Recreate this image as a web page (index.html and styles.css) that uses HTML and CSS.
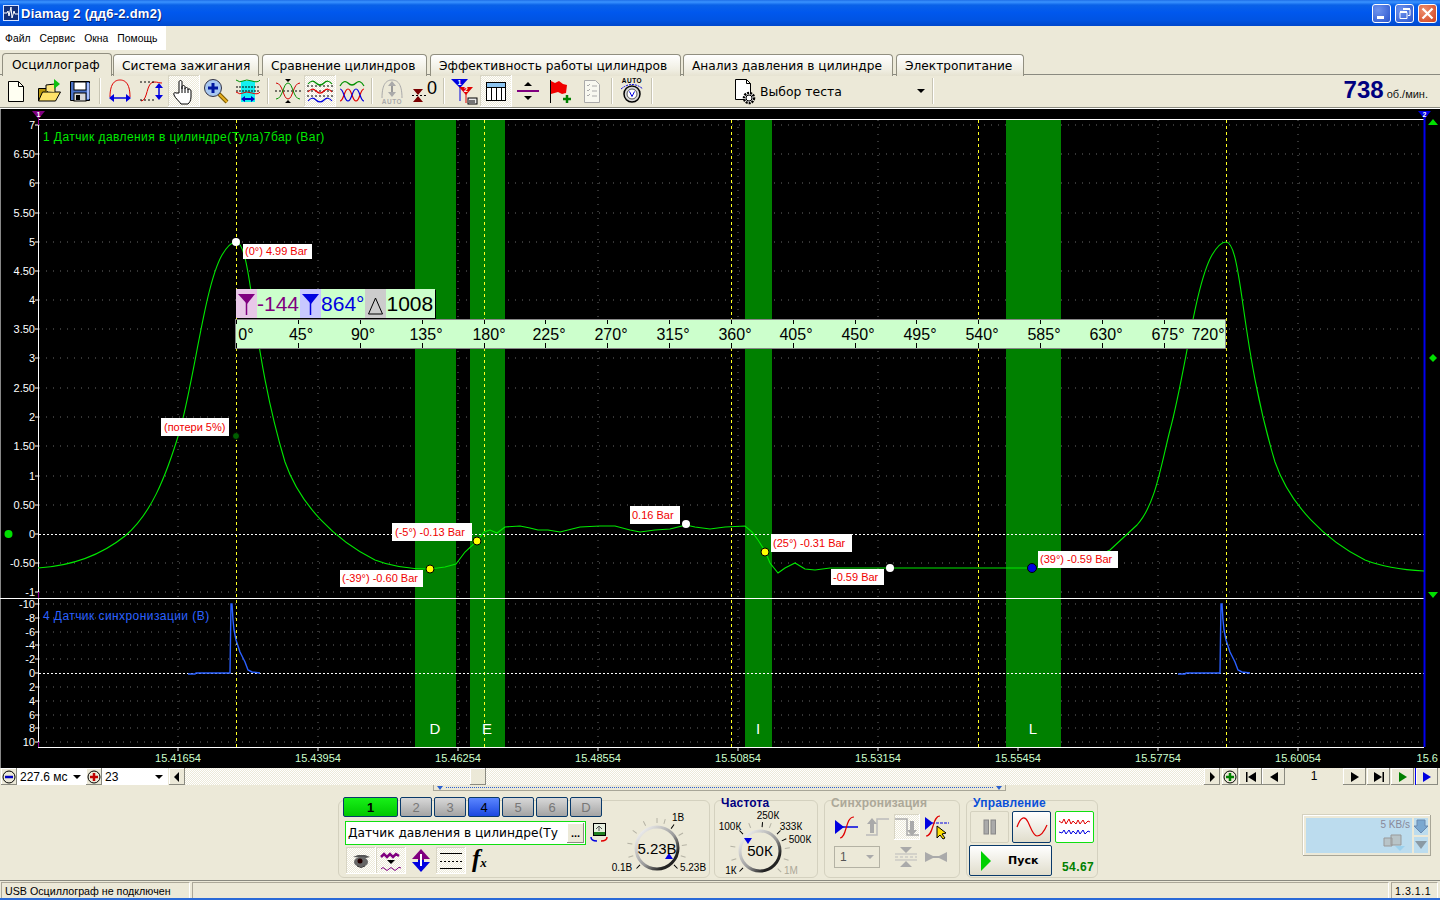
FILE: index.html
```html
<!DOCTYPE html>
<html lang="ru">
<head>
  <meta charset="UTF-8">
  <title>Diamag 2 (дд6-2.dm2)</title>
  <link rel="stylesheet" href="styles.css">
</head>
<body>
  <header class="titlebar">
    <svg class="app-icon" width="16" height="16" viewBox="0 0 16 16"><rect x="0.5" y="0.5" width="15" height="15" fill="#12307a" stroke="#d8e4ff"/><path d="M1 8h3l1-2 1 5 2-9 1 11 2-7 1 3h3" fill="none" stroke="#fff"/></svg>
    <span class="title-text">Diamag 2 (дд6-2.dm2)</span>
    <div class="winbtns">
      <button class="winbtn"><svg width="19" height="19" viewBox="0 0 19 19"><rect x="5" y="12" width="7" height="3" fill="#fff"/></svg></button>
      <button class="winbtn"><svg width="19" height="19" viewBox="0 0 19 19"><path d="M8 5.5h7v6h-2M5 8.5h7v6H5z" fill="none" stroke="#fff"/><path d="M8 5h7M5 8h7" stroke="#fff" stroke-width="2"/></svg></button>
      <button class="winbtn close"><svg width="19" height="19" viewBox="0 0 19 19"><path d="M4.5 4.5l10 10M14.5 4.5l-10 10" stroke="#fff" stroke-width="2.2"/></svg></button>
    </div>
  </header>

  <nav class="menubar">
    <span>Файл</span><span>Сервис</span><span>Окна</span><span>Помощь</span>
  </nav>

  <div class="tabs">
    <div class="tab active">Осциллограф</div>
    <div class="tab w-ign">Система зажигания</div>
    <div class="tab w-cmp">Сравнение цилиндров</div>
    <div class="tab w-eff">Эффективность работы цилиндров</div>
    <div class="tab w-prs">Анализ давления в цилиндре</div>
    <div class="tab w-pwr">Электропитание</div>
  </div>

  <div class="toolbar">
    <button class="tool"><svg width="28" height="28" viewBox="0 0 28 28"><path d="M6.5 4.5h10l5 5v15h-15z" fill="#fffff2" stroke="#000"/><path d="M16.5 4.5v5h5" fill="none" stroke="#000"/></svg></button>
    <button class="tool"><svg width="28" height="28" viewBox="0 0 28 28"><path d="M4.500 11.500h9v12h-9z" fill="#b8960c" stroke="#000"/><path d="M4.500 24l4-9h18l-5 9z" fill="#ffe26a" stroke="#000"/><path d="M12 14V8l9-1v8" fill="#ffe680" stroke="#000"/><path d="M20 2l6 5-6 5z" fill="#10c010"/></svg></button>
    <button class="tool"><svg width="28" height="28" viewBox="0 0 28 28"><path d="M4.500 4.500h19v19h-19z" fill="#4a72c8" stroke="#000"/><rect x="8" y="5" width="12" height="8" fill="#fff" stroke="#000"/><rect x="8" y="16" width="12" height="8" fill="#d8d8d8" stroke="#000"/><rect x="10" y="18" width="4" height="5" fill="#000"/><rect x="21" y="6" width="2.500" height="16" fill="#a8c0ff"/></svg></button>
    <i class="sep"></i>
    <button class="tool"><svg width="28" height="28" viewBox="0 0 28 28"><path d="M4 20C4 5 10 3 14 3s10 2 10 17" fill="none" stroke="#e00000"/><path d="M7 21h14" stroke="#0000e0" stroke-width="1.500"/><path d="M3 21l5-4v8zM25 21l-5-4v8z" fill="#0000e0"/></svg></button>
    <button class="tool"><svg width="28" height="28" viewBox="0 0 28 28"><path d="M3 24c7 0 5-19 13-19" fill="none" stroke="#e00000"/><path d="M16 5c4 0 5 1 8 1" fill="none" stroke="#e00000"/><path d="M2 5h15M2 23h15" stroke="#000" stroke-dasharray="2 2"/><path d="M21 9v10" stroke="#0000e0" stroke-width="1.500"/><path d="M21 6l-4 5h8zM21 23l-4-5h8z" fill="#0000e0"/></svg></button>
    <button class="tool pressed"><svg width="28" height="28" viewBox="0 0 28 28"><path d="M9 16V5c0-2 3-2 3 0v7-2c0-2 3-2 3 0v2c0-2 3-2 3 0v1c0-2 3-1 3 1v6c0 4-2 6-3 7h-7c-1-2-6-6-7-9-1-2 1-3 2-2z" fill="#fff" stroke="#000"/><path d="M12 12v4M15 12v4M18 13v3" stroke="#000"/></svg></button>
    <button class="tool"><svg width="28" height="28" viewBox="0 0 28 28"><path d="M17 17l8 8" stroke="#7a5a00" stroke-width="4"/><path d="M17 17l8 8" stroke="#e8b020" stroke-width="2"/><circle cx="11" cy="11" r="8.500" fill="#a8c8f0" stroke="#334"/><path d="M6 11h10M11 6v10" stroke="#0018a0" stroke-width="3"/></svg></button>
    <button class="tool"><svg width="28" height="28" viewBox="0 0 28 28"><rect x="7" y="4" width="14" height="21" fill="#14f0f0"/><path d="M2 10h24M2 14h24" stroke="#000" stroke-dasharray="2 1"/><path d="M2 3q4 3 7 1t9 0 8-1" fill="none" stroke="#009000"/><path d="M2 15q4 3 7 1t9 0 8-1" fill="none" stroke="#e00000"/><path d="M10 22h8" stroke="#0000c0" stroke-width="2"/><path d="M7 22l4-3v6zM21 22l-4-3v6z" fill="#0000c0"/></svg></button>
    <i class="sep"></i>
    <button class="tool"><svg width="28" height="28" viewBox="0 0 28 28"><path d="M1 14h26" stroke="#000" stroke-dasharray="2 2"/><path d="M2 6c7 0 7 16 12 16s5-16 12-16" fill="none" stroke="#d00000"/><path d="M2 22c7 0 7-16 12-16s5 16 12 16" fill="none" stroke="#009000"/><path d="M11 2h6l-3 3zM11 26h6l-3-3z" fill="#000"/></svg></button>
    <button class="tool pressed"><svg width="28" height="28" viewBox="0 0 28 28"><path d="M1 9h26M1 14h26M1 19h26" stroke="#000" stroke-dasharray="2 2"/><path d="M2 7q4-5 8-1t8 0 8 1" fill="none" stroke="#009000" stroke-width="1.200"/><path d="M2 15q4-5 8-1t8 0 8 1" fill="none" stroke="#e00000" stroke-width="1.200"/><path d="M2 24q4-5 8-1t8 0 8 1" fill="none" stroke="#0000e0" stroke-width="1.200"/></svg></button>
    <button class="tool"><svg width="28" height="28" viewBox="0 0 28 28"><path d="M2 9q4-7 8-3t8 0 8 3" fill="none" stroke="#009000" stroke-width="1.200"/><path d="M2 24c4 0 4-12 8-12s4 12 8 12 4-12 8-12" fill="none" stroke="#e00000" stroke-width="1.200"/><path d="M2 12c4 0 4 12 8 12s4-12 8-12 4 12 8 12" fill="none" stroke="#0000e0" stroke-width="1.200"/></svg></button>
    <i class="sep"></i>
    <button class="tool"><svg width="28" height="28" viewBox="0 0 28 28"><path d="M4 21C4 6 9 3 14 3s10 3 10 18" fill="none" stroke="#aaa"/><path d="M14 7v10" stroke="#999" stroke-width="2"/><path d="M14 4l-4 5h8zM14 20l-4-5h8z" fill="#aaa"/><text class="auto-txt dim" x="14" y="27">AUTO</text></svg></button>
    <button class="tool"><svg width="28" height="28" viewBox="0 0 28 28"><path d="M2 18.500h16" stroke="#000" stroke-dasharray="2 2"/><path d="M3 12h10l-5 6zM3 25h10l-5-6z" fill="#7a0000"/><text class="zero-txt" x="17" y="17">0</text></svg></button>
    <i class="sep"></i>
    <button class="tool"><svg width="28" height="28" viewBox="0 0 28 28"><path d="M1 2h17l-8 9z" fill="#0000e0"/><path d="M10 8v16" stroke="#0000e0"/><path d="M9 10h14l-7 8z" fill="#e00000"/><path d="M16 15v11" stroke="#e00000"/><text class="flag-num" x="9.500" y="8">1</text><text class="flag-num" x="16" y="15">2</text><rect x="18" y="21" width="9" height="6" fill="#e8e8e8" stroke="#000"/><path d="M20 23v3M22 23v3M24 23v3" stroke="#000"/></svg></button>
    <button class="tool pressed"><svg width="28" height="28" viewBox="0 0 28 28"><rect x="4.500" y="5.500" width="19" height="18" fill="#fff" stroke="#000"/><rect x="5" y="6" width="18" height="4" fill="#8cc4f0"/><path d="M4 10.500h20M9.500 10v13M14.500 10v13M19.500 10v13" stroke="#000"/></svg></button>
    <button class="tool"><svg width="28" height="28" viewBox="0 0 28 28"><path d="M3 14h22" stroke="#800080" stroke-width="2"/><path d="M14 5l-4 4h8zM14 23l-4-4h8z" fill="#000"/></svg></button>
    <button class="tool"><svg width="28" height="28" viewBox="0 0 28 28"><path d="M4.500 3v23" stroke="#000"/><path d="M5 4l4 2 4-2 4 3 4 1-1 8-4 1-4-2-7 2z" fill="#f00000"/><path d="M21 18v8M17 22h8" stroke="#008000" stroke-width="2.500"/></svg></button>
    <button class="tool"><svg width="28" height="28" viewBox="0 0 28 28"><path d="M6.500 3.500h11l4 4v18h-15z" fill="#f8f8f0" stroke="#aaa"/><path d="M9 8l1 1 2-2M9 13l1 1 2-2M9 18l1 1 2-2M14 9h5M14 14h5M14 19h5" fill="none" stroke="#aaa"/></svg></button>
    <i class="sep"></i>
    <button class="tool"><svg width="28" height="28" viewBox="0 0 28 28"><text class="auto-txt" x="14" y="6">AUTO</text><path d="M3 12Q14 3 25 12" fill="none" stroke="#0000e0" stroke-dasharray="2 1"/><circle cx="14" cy="17" r="8" fill="#d8d8d8" stroke="#000" stroke-width="1.500"/><circle cx="14" cy="17" r="5" fill="#fff" stroke="#555"/><path d="M11.500 14.500l2.500 5 2.500-5" fill="none" stroke="#0000e0"/></svg></button>
    <i class="sep"></i>
    <div class="test-select">
      <svg width="28" height="28" viewBox="0 0 28 28"><path d="M4.500 2.500h11l4 4v16h-15z" fill="#fff" stroke="#000"/><path d="M15.500 2.500v4h4" fill="none" stroke="#000"/><circle cx="18" cy="21" r="5" fill="#fff" stroke="#000" stroke-width="2.500" stroke-dasharray="2 1"/><circle cx="18" cy="21" r="3" fill="#fff" stroke="#000"/></svg>
      <span>Выбор теста</span>
      <b class="caret"></b>
    </div>
    <i class="sep"></i>
    <div class="rpm"><strong>738</strong><span>об./мин.</span></div>
  </div>

  <div class="scope">
    <svg class="scope-svg" width="1440" height="659" viewBox="0 109 1440 659">
      <g class="grid">
        <path d="M39 154H1424M39 183H1424M39 213H1424M39 242H1424M39 271H1424M39 300H1424M39 329H1424M39 358H1424M39 388H1424M39 417H1424M39 446H1424M39 476H1424M39 505H1424M39 563H1424M39 592H1424M39 125H1424"/>
        <path d="M39 604H1424M39 618H1424M39 632H1424M39 645H1424M39 659H1424M39 687H1424M39 701H1424M39 715H1424M39 728H1424M39 742H1424"/>
        <path d="M178 120V747M318 120V747M458 120V747M598 120V747M738 120V747M878 120V747M1018 120V747M1158 120V747M1298 120V747"/>
      </g>
      <g class="bands">
        <rect x="415" y="120" width="41" height="627"/>
        <rect x="470" y="120" width="35" height="627"/>
        <rect x="745" y="120" width="27" height="627"/>
        <rect x="1006" y="120" width="55" height="627"/>
      </g>
      <path class="cursor" d="M236.500 120V747M484.500 120V747M731.500 120V747M978.500 120V747M1226.500 120V747"/>
      <path class="zero" d="M39 534.500H1424M39 673.500H1424"/>
      <path class="frame" d="M38.500 119V747M38 119.500H1424M0 598.500H1424M38 747.500H1424"/>
      <path class="magenta" d="M38.500 112V125M38.500 592V598M38.500 742V747"/>
      <path class="blue-edge" d="M1424.500 115V747"/>
      <path class="yticks" d="M35 125h3M35 154h3M35 183h3M35 213h3M35 242h3M35 271h3M35 300h3M35 329h3M35 358h3M35 388h3M35 417h3M35 446h3M35 476h3M35 505h3M35 534h3M35 563h3M35 592h3M35 604h3M35 618h3M35 632h3M35 645h3M35 659h3M35 673h3M35 687h3M35 701h3M35 715h3M35 728h3M35 742h3M178 747v4M318 747v4M458 747v4M598 747v4M738 747v4M878 747v4M1018 747v4M1158 747v4M1298 747v4"/>

      <path class="trace-green" d="M38 568C70 566 100 556 125 536C150 515 165 480 180 430C195 375 205 285 222 255C228 245 232 242 236 242C243 242 247 262 253 305C260 355 268 405 285 462C300 505 335 540 375 560C390 566 405 569 430 569L445 567L456 564L465 552L477 541L484 532L490 530L497 533L505 527L520 526L530 528L538 530L548 530L560 532L580 527L600 526L615 526L630 530L640 532L655 530L670 529L686 525L695 527L710 529L725 527L745 526L752 532L758 540L765 551L770 563L778 573L785 568L795 563L805 569L815 570L830 568L860 568L890 568L1032 568L1045 567L1061 564L1085 562L1110 550L1137 525C1155 505 1160 470 1170 430C1185 375 1195 285 1212 255C1218 245 1222 242 1226 242C1233 242 1237 262 1243 305C1250 355 1258 405 1275 462C1290 505 1325 540 1365 560C1385 568 1405 570 1424 571"/>
      <polyline class="trace-blue" points="188,674 195,674 196,673 230,673 231,604 232,604 233,620 234,630 236,640 240,652 245,662 248,670 252,672 260,673"/>
      <polyline class="trace-blue" points="1178,674 1185,674 1186,673 1220,673 1221,604 1222,604 1223,620 1224,630 1226,640 1230,652 1235,662 1238,670 1242,672 1250,673"/>

      <g class="ylabels">
        <text x="35" y="129">7</text><text x="35" y="158">6.50</text><text x="35" y="187">6</text><text x="35" y="217">5.50</text><text x="35" y="246">5</text><text x="35" y="275">4.50</text><text x="35" y="304">4</text><text x="35" y="333">3.50</text><text x="35" y="362">3</text><text x="35" y="392">2.50</text><text x="35" y="421">2</text><text x="35" y="450">1.50</text><text x="35" y="480">1</text><text x="35" y="509">0.50</text><text x="35" y="538">0</text><text x="35" y="567">-0.50</text><text x="35" y="596">-1</text>
        <text x="35" y="608">-10</text><text x="35" y="622">-8</text><text x="35" y="636">-6</text><text x="35" y="649">-4</text><text x="35" y="663">-2</text><text x="35" y="677">0</text><text x="35" y="691">2</text><text x="35" y="705">4</text><text x="35" y="719">6</text><text x="35" y="732">8</text><text x="35" y="746">10</text>
      </g>
      <g class="xlabels">
        <text x="178" y="762">15.41654</text><text x="318" y="762">15.43954</text><text x="458" y="762">15.46254</text><text x="598" y="762">15.48554</text><text x="738" y="762">15.50854</text><text x="878" y="762">15.53154</text><text x="1018" y="762">15.55454</text><text x="1158" y="762">15.57754</text><text x="1298" y="762">15.60054</text><text class="x-last" x="1438" y="762">15.6</text>
      </g>
      <text class="ch-green" x="43" y="141">1 Датчик давления в цилиндре(Тула)7бар (Bar)</text>
      <text class="ch-blue" x="43" y="620">4 Датчик синхронизации (В)</text>
      <g class="band-names">
        <text x="435" y="734">D</text><text x="487" y="734">E</text><text x="758" y="734">I</text><text x="1033" y="734">L</text>
      </g>

      <path d="M32 111h13l-6.500 8z" fill="#800080"/><text class="flag-num" x="38.500" y="116.500">1</text>
      <path d="M1418 111h13l-6.500 8z" fill="#0000e0"/><text class="flag-num" x="1424.500" y="116.500">2</text>
      <path d="M1428 125l5-6 5 6zM1428 592l5 6 5-6z" fill="#00e000"/>
      <path d="M1433 354l4 4-4 4-4-4z" fill="#00e000"/>
      <circle cx="8.500" cy="534" r="4" fill="#00e000"/>

      <g class="tags">
        <rect x="243" y="244" width="69" height="15"/><text x="245" y="255">(0°) 4.99 Bar</text>
        <rect x="161" y="418" width="68" height="18"/><text x="164" y="431">(потери 5%)</text>
        <rect x="392" y="523" width="80" height="18"/><text x="395" y="536">(-5°) -0.13 Bar</text>
        <rect x="340" y="570" width="83" height="17"/><text x="342" y="582">(-39°) -0.60 Bar</text>
        <rect x="630" y="506" width="50" height="18"/><text x="632" y="519">0.16 Bar</text>
        <rect x="771" y="534" width="81" height="18"/><text x="773" y="547">(25°) -0.31 Bar</text>
        <rect x="831" y="569" width="53" height="16"/><text x="833" y="581">-0.59 Bar</text>
        <rect x="1038" y="551" width="80" height="17"/><text x="1040" y="563">(39°) -0.59 Bar</text>
      </g>
      <g class="pts">
        <circle class="pt-white" cx="236" cy="242" r="4"/>
        <circle cx="236" cy="436" r="3.500" fill="#006000"/>
        <circle cx="430" cy="569" r="4" fill="#ff0"/>
        <circle cx="477" cy="541" r="4" fill="#ff0"/>
        <circle class="pt-white" cx="686" cy="524" r="4"/>
        <circle cx="765" cy="552" r="4" fill="#ff0"/>
        <circle class="pt-white" cx="890" cy="568" r="4"/>
        <circle cx="1032" cy="568" r="4.500" fill="#0000e0"/>
      </g>

      <rect class="ruler-bg" x="235.500" y="319.500" width="990" height="29"/>
      <path class="ruler-ticks" d="M236.500 320v4M298.500 320v4M360.500 320v4M422.500 320v4M484.500 320v4M545.500 320v4M607.500 320v4M669.500 320v4M731.500 320v4M793.500 320v4M855.500 320v4M916.500 320v4M978.500 320v4M1040.500 320v4M1102.500 320v4M1164.500 320v4M236.500 343v5M298.500 343v5M360.500 343v5M422.500 343v5M484.500 343v5M545.500 343v5M607.500 343v5M669.500 343v5M731.500 343v5M793.500 343v5M855.500 343v5M916.500 343v5M978.500 343v5M1040.500 343v5M1102.500 343v5M1164.500 343v5"/>
      <g class="ruler-labels">
        <text x="246" y="340">0°</text><text x="301" y="340">45°</text><text x="363" y="340">90°</text><text x="426" y="340">135°</text><text x="489" y="340">180°</text><text x="549" y="340">225°</text><text x="611" y="340">270°</text><text x="673" y="340">315°</text><text x="735" y="340">360°</text><text x="796" y="340">405°</text><text x="858" y="340">450°</text><text x="920" y="340">495°</text><text x="982" y="340">540°</text><text x="1044" y="340">585°</text><text x="1106" y="340">630°</text><text x="1168" y="340">675°</text><text x="1208" y="340">720°</text>
      </g>
    </svg>

    <div class="readout">
      <span class="ro-icon purple"><svg width="21" height="28" viewBox="0 0 21 28"><path d="M2 5h17l-8 10z" fill="#800080"/><path d="M10.500 12v14" stroke="#800080" stroke-width="1.500"/></svg></span>
      <span class="ro-val purple-text">-144</span>
      <span class="ro-icon blue"><svg width="21" height="28" viewBox="0 0 21 28"><path d="M2 5h17l-8 10z" fill="#0000e0"/><path d="M10.500 12v14" stroke="#0000e0" stroke-width="1.500"/></svg></span>
      <span class="ro-val blue-text">864°</span>
      <span class="ro-icon grey"><svg width="21" height="28" viewBox="0 0 21 28"><path d="M10.500 9L3.500 25h14z" fill="none" stroke="#000"/></svg></span>
      <span class="ro-val">1008</span>
    </div>
  </div>

  <div class="scrollrow">
    <button class="sbtn round"><svg width="14" height="14" viewBox="0 0 14 14"><circle cx="7" cy="7" r="6" fill="none" stroke="#000"/><path d="M3 7h8" stroke="#0000c0" stroke-width="2.500"/></svg></button>
    <div class="sfield first">227.6 мс<b class="caret"></b></div>
    <button class="sbtn round"><svg width="14" height="14" viewBox="0 0 14 14"><circle cx="7" cy="7" r="6" fill="none" stroke="#000"/><path d="M3 7h8M7 3v8" stroke="#c00000" stroke-width="2.500"/></svg></button>
    <div class="sfield second">23<b class="caret"></b></div>
    <button class="sbtn"><svg width="8" height="10" viewBox="0 0 8 10"><path d="M6 0v10L1 5z"/></svg></button>
    <div class="track"><div class="thumb"></div></div>
    <button class="sbtn"><svg width="8" height="10" viewBox="0 0 8 10"><path d="M2 0v10l5-5z"/></svg></button>
    <button class="sbtn plus"><svg width="14" height="14" viewBox="0 0 14 14"><circle cx="7" cy="7" r="6" fill="none" stroke="#000"/><path d="M3 7h8M7 3v8" stroke="#008000" stroke-width="2.500"/></svg></button>
    <button class="sbtn nav gap"><svg width="12" height="10" viewBox="0 0 12 10"><path d="M1 0h1.500v10H1zM11 0v10L3 5z"/></svg></button>
    <button class="sbtn nav"><svg width="12" height="10" viewBox="0 0 12 10"><path d="M10 0v10L2 5z"/></svg></button>
    <div class="pageno">1</div>
    <button class="sbtn nav"><svg width="12" height="10" viewBox="0 0 12 10"><path d="M2 0v10l8-5z"/></svg></button>
    <button class="sbtn nav gap"><svg width="12" height="10" viewBox="0 0 12 10"><path d="M11 0H9.500v10H11zM1 0v10l8-5z"/></svg></button>
    <button class="sbtn nav gap"><svg width="12" height="10" viewBox="0 0 12 10"><path d="M2 0v10l8-5z" fill="#008000"/></svg></button>
    <button class="sbtn nav last"><svg width="12" height="10" viewBox="0 0 12 10"><path d="M2 0v10l8-5z" fill="#0000e0"/></svg></button>
  </div>

  <div class="lower">
    <div class="range-bar"><b class="mark"></b><span class="range-dots"></span><b class="mark"></b></div>
    <div class="groups">
      <section class="grp grp-channel">
        <div class="channel-col">
          <div class="channels">
            <button class="ch ch-on">1</button>
            <button class="ch">2</button>
            <button class="ch">3</button>
            <button class="ch ch-sel">4</button>
            <button class="ch">5</button>
            <button class="ch">6</button>
            <button class="ch">D</button>
          </div>
          <div class="combo-row">
            <div class="combo"><span class="combo-text">Датчик давления в цилиндре(Ту</span><button class="dots">...</button></div>
            <svg width="18" height="20" viewBox="0 0 18 20"><rect x="3.500" y="0.500" width="12" height="12" fill="#e8f0e0" stroke="#000"/><rect x="4" y="9" width="11" height="3" fill="#208020"/><path d="M6 6l3-3 3 3M9 8V4" fill="none" stroke="#555"/><path d="M1 14q0 4 6 4" fill="none" stroke="#0000e0" stroke-width="1.500"/><path d="M17 14q0 4-6 4" fill="none" stroke="#e00000" stroke-width="1.500"/></svg>
          </div>
          <div class="ch-tools">
            <button class="ch-tool pressed"><svg width="24" height="20" viewBox="0 0 24 20"><path d="M4 6l5-2h7l5 2-4 1z" fill="#555"/><ellipse cx="12" cy="11" rx="7" ry="5" fill="#666"/><circle cx="11" cy="10" r="2.500" fill="#200"/><path d="M8 15q4 3 8 0" stroke="#333" fill="none"/></svg></button>
            <button class="ch-tool pressed"><svg width="24" height="24" viewBox="0 0 24 24"><path d="M2 8l3-3 3 3 3-3 3 3 3-3 3 2" fill="none" stroke="#800080" stroke-width="2.500"/><path d="M8 11h8l-4 4z"/><path d="M2 20q2-3 4 0t4 0 4 0 4 0 4-1" fill="none" stroke="#800080"/></svg></button>
            <button class="ch-tool plain"><svg width="20" height="25" viewBox="0 0 20 25"><path d="M10 1l9 10H1z" fill="#800080"/><path d="M10 24l9-10H1z" fill="#0000e0"/><rect x="7" y="8" width="6" height="4" fill="#800080"/><rect x="7" y="12" width="6" height="4" fill="#0000e0"/><path d="M10 6v12" stroke="#fff" stroke-width="2"/></svg></button>
            <button class="ch-tool pressed"><svg width="24" height="20" viewBox="0 0 24 20"><path d="M1 2.500h22M1 17.500h22" stroke="#000"/><path d="M1 10.500h22" stroke="#000" stroke-dasharray="2 2"/></svg></button>
            <span class="fx"><i>f</i><small>x</small></span>
          </div>
        </div>
        <svg class="knob" width="100" height="76" viewBox="610 801 100 76">
          <defs>
            <linearGradient id="ring" x1="0" y1="0" x2="1" y2="1"><stop offset="0.100" stop-color="#eee"/><stop offset="0.550" stop-color="#999"/><stop offset="0.800" stop-color="#222"/></linearGradient>
          </defs>
          <g class="knob-ticks">
            <path d="M657 823v-5" transform="rotate(-108 657 848)"/><path d="M657 823v-5" transform="rotate(-81 657 848)"/><path d="M657 823v-5" transform="rotate(-54 657 848)"/><path d="M657 823v-5" transform="rotate(-27 657 848)"/><path d="M657 823v-5"/><path d="M657 823v-5" transform="rotate(16 657 848)"/><path d="M657 823v-5" transform="rotate(60 657 848)"/><path d="M657 823v-5" transform="rotate(84 657 848)"/><path d="M657 823v-5" transform="rotate(108 657 848)"/>
          </g>
          <path class="knob-major" d="M657 824v-5" transform="rotate(36 657 848)"/>
          <path class="knob-major" d="M657 824v-5" transform="rotate(-135 657 848)"/>
          <path class="knob-major" d="M657 824v-5" transform="rotate(135 657 848)"/>
          <circle class="knob-ring" cx="657" cy="848" r="21"/>
          <path d="M669 853l-4 6h8z" fill="#0000e0"/>
          <text class="knob-val" x="657" y="854">5.23В</text>
          <text class="knob-label" x="678" y="821">1В</text>
          <text class="knob-label" x="622" y="871">0.1В</text>
          <text class="knob-label" x="693" y="871">5.23В</text>
        </svg>
      </section>

      <section class="grp grp-freq">
        <h4 class="grp-title navy">Частота</h4>
        <svg class="knob" width="102" height="76" viewBox="715 801 102 76">
          <g class="knob-ticks">
            <path d="M760 826v-5" transform="rotate(-108 760 851)"/><path d="M760 826v-5" transform="rotate(-81 760 851)"/><path d="M760 826v-5" transform="rotate(-22 760 851)"/><path d="M760 826v-5" transform="rotate(22 760 851)"/><path d="M760 826v-5" transform="rotate(84 760 851)"/><path d="M760 826v-5" transform="rotate(108 760 851)"/><path d="M760 826v-5" transform="rotate(135 760 851)"/>
          </g>
          <path class="knob-major" d="M760 827v-5" transform="rotate(-135 760 851)"/>
          <path class="knob-major" d="M760 827v-5" transform="rotate(-45 760 851)"/>
          <path class="knob-major" d="M760 827v-5" transform="rotate(5 760 851)"/>
          <path class="knob-major" d="M760 827v-5" transform="rotate(45 760 851)"/>
          <path class="knob-major" d="M760 827v-5" transform="rotate(65 760 851)"/>
          <circle class="knob-ring" cx="760" cy="851" r="20"/>
          <path d="M744 838h8l-4 6z" fill="#0000e0"/>
          <text class="knob-val" x="760" y="856">50К</text>
          <text class="knob-label" x="730" y="830">100К</text>
          <text class="knob-label" x="768" y="819">250К</text>
          <text class="knob-label" x="791" y="830">333К</text>
          <text class="knob-label" x="800" y="843">500К</text>
          <text class="knob-label" x="731" y="874">1К</text>
          <text class="knob-label dim-label" x="791" y="874">1М</text>
        </svg>
      </section>

      <section class="grp grp-sync">
        <h4 class="grp-title muted">Синхронизация</h4>
        <div class="sync-row">
          <span class="sync-icon"><svg width="26" height="24" viewBox="0 0 26 24"><path d="M1 5l9 7-9 7z" fill="#0000e0"/><path d="M8 12h16" stroke="#0000e0" stroke-width="1.500"/><path d="M6 23c7 0 5-21 14-21" fill="none" stroke="#e00000" stroke-width="1.200"/></svg></span>
          <span class="sync-icon"><svg width="26" height="24" viewBox="0 0 26 24"><path d="M2 20h11V4h12" fill="none" stroke="#bbb" stroke-width="1.500"/><path d="M8 3l5 6h-3v9H6V9H3z" fill="#aaa"/></svg></span>
          <span class="sync-icon pressed"><svg width="26" height="24" viewBox="0 0 26 24"><path d="M1 4h12v16h12" fill="none" stroke="#aaa" stroke-width="1.500"/><path d="M18 21l-5-6h3V6h4v9h3z" fill="#aaa"/></svg></span>
          <span class="sync-icon"><svg width="26" height="26" viewBox="0 0 26 26"><path d="M1 3l8 6-8 7z" fill="#0000e0"/><path d="M8 9h17" stroke="#0000e0" stroke-dasharray="3 1"/><path d="M2 22c8 0 6-20 14-20" fill="none" stroke="#e00000" stroke-width="1.200"/><path d="M13 12l9 7-4 1 3 4-2 1-3-4-3 3z" fill="#ffe000" stroke="#000"/></svg></span>
        </div>
        <div class="sync-row second">
          <div class="sync-select">1<b class="caret light"></b></div>
          <span class="sync-icon"><svg width="26" height="24" viewBox="0 0 26 24"><path d="M7 2h12l-6 6zM7 22h12l-6-6z" fill="#aaa"/><path d="M2 9h22M2 15h22" stroke="#bbb"/><path d="M2 12h22" stroke="#bbb" stroke-dasharray="3 2"/></svg></span>
          <span class="sync-icon"><svg width="26" height="24" viewBox="0 0 26 24"><path d="M2 7l10 5-10 5zM24 7l-10 5 10 5z" fill="#aaa"/><path d="M2 12h22" stroke="#aaa" stroke-width="2"/></svg></span>
        </div>
      </section>

      <section class="grp grp-ctrl">
        <h4 class="grp-title blue">Управление</h4>
        <div class="ctrl-row">
          <button class="ctrl-btn flat"><svg width="14" height="16" viewBox="0 0 14 16"><rect x="1" y="1" width="4.500" height="14" fill="#aaa" stroke="#888"/><rect x="8" y="1" width="4.500" height="14" fill="#aaa" stroke="#888"/></svg></button>
          <button class="ctrl-btn navy-edge"><svg width="32" height="22" viewBox="0 0 32 22"><path d="M1 11C5 0 9 0 12 6s5 14 9 14 7-4 10-11" fill="none" stroke="#e00000" stroke-width="1.200"/></svg></button>
          <button class="ctrl-btn green-edge"><svg width="34" height="24" viewBox="0 0 34 24"><path d="M1 6l3 2 2-4 2 5 3-5 2 5 2-3 3 3 2-4 2 4 3-4 2 4 3-3 2 1" fill="none" stroke="#e00000"/><path d="M1 17l3 1 2-3 2 4 3-4 2 4 2-3 3 3 2-4 2 4 3-4 2 4 3-3 2 1" fill="none" stroke="#0000e0"/></svg></button>
        </div>
        <div class="ctrl-row second">
          <button class="start"><svg width="12" height="20" viewBox="0 0 12 20"><path d="M1 0v20l10-10z" fill="#00d000"/></svg><span>Пуск</span></button>
          <span class="speed">54.67</span>
        </div>
      </section>

      <aside class="traffic">
        <div class="traffic-main">
          <span>5 KB/s</span>
          <svg width="26" height="20" viewBox="0 0 26 20"><path d="M9 3h10v10H9zM2 6h8v8H2z" fill="#b8c4c8" stroke="#999"/><path d="M13 14h10l-5 5z" fill="#9cd0ec"/></svg>
        </div>
        <div class="traffic-side">
          <span><svg width="14" height="14" viewBox="0 0 14 14"><path d="M3 1h8v6h3l-7 7-7-7h3z" fill="#7aa8d0" stroke="#6a8ab0"/></svg></span>
          <span><svg width="14" height="14" viewBox="0 0 14 14"><path d="M1 3h12l-6 8z" fill="#8a9aa4"/></svg></span>
        </div>
      </aside>
    </div>
  </div>

  <footer class="statusbar">
    <div class="cell c-usb">USB Осциллограф не подключен</div>
    <div class="cell c-mid"></div>
    <div class="cell c-ver">1.3.1.1</div>
  </footer>
  <div class="win-bottom"></div>
</body>
</html>
```

FILE: styles.css
```css
html, body {
  margin: 0;
  width: 1440px;
  height: 900px;
  overflow: hidden;
}
body {
  background-color: #ece9d8;
  font-family: 'Liberation Sans', Arial, sans-serif;
  font-size: 11px;
  color: #000;
}
button {
  font-family: inherit;
  padding: 0;
  margin: 0;
  border: none;
  background: none;
}
svg {
  display: block;
}

/* title bar */
.titlebar {
  height: 26px;
  display: flex;
  align-items: center;
  padding-left: 3px;
  background: linear-gradient(#1f6fe8 0, #3a93ff 2px, #0a62e8 5px, #0058ee 12px, #0054e3 20px, #0048cc 26px);
}
.title-text {
  margin-left: 2px;
  color: #fff;
  font-size: 13px;
  font-weight: bold;
  letter-spacing: 0.25px;
  text-shadow: 1px 1px 0 #0a2a80;
}
.winbtns {
  margin-left: auto;
  display: flex;
  gap: 4px;
  padding-right: 3px;
}
.winbtn {
  width: 19px;
  height: 19px;
  border: 1px solid #fff;
  border-radius: 3px;
  box-sizing: border-box;
  background: radial-gradient(circle at 30% 30%, #6f94ee, #2a55cc);
  margin-top: 1px;
}
.winbtn svg {
  margin: -1px;
}
.winbtn.close {
  background: radial-gradient(circle at 30% 30%, #ee9070, #d0401c);
}

/* menu */
.menubar {
  height: 24px;
  width: 166px;
  background: #fff;
  display: flex;
  align-items: center;
  gap: 9px;
  padding-left: 5px;
  box-sizing: border-box;
  font-size: 10.4px;
}

/* tabs */
.tabs {
  height: 25px;
  box-sizing: border-box;
  padding: 3px 0 0 2px;
  display: flex;
  gap: 3px;
  border-bottom: 1px solid #8a8a80;
}
.tab {
  height: 22px;
  box-sizing: border-box;
  border: 1px solid #918f80;
  border-bottom: none;
  border-radius: 4px 4px 0 0;
  background: linear-gradient(#fff, #f0eee2 70%, #e6e3d2);
  font-family: 'DejaVu Sans', sans-serif;
  font-size: 12.2px;
  line-height: 22px;
  padding-left: 8px;
  white-space: nowrap;
  margin-top: 1px;
  overflow: hidden;
}
.tab.active {
  width: 110px;
  height: 23px;
  margin-top: -1px;
  padding-left: 9px;
  background: #ece9d8;
  position: relative;
  top: 1px;
}
.tab.w-ign { width: 146px; margin-left: -2px; }
.tab.w-cmp { width: 165px; }
.tab.w-eff { width: 251px; }
.tab.w-prs { width: 210px; margin-left: -1px; }
.tab.w-pwr { width: 128px; }

/* toolbar */
.toolbar {
  height: 33px;
  display: flex;
  align-items: center;
  border-bottom: 1px solid #8a8a80;
  box-sizing: border-box;
}
.tool {
  width: 32px;
  height: 32px;
  display: flex;
  align-items: center;
  justify-content: center;
  flex: none;
}
.pressed {
  background: repeating-conic-gradient(#fff 0 25%, #ece9d8 0 50%) 0 0 / 2px 2px;
  box-shadow: inset -1px -1px 0 #fff, inset 1px 1px 0 #d8d5c4;
}
.sep {
  width: 2px;
  height: 26px;
  margin: 0 3px;
  background: #c8c5b4;
  border-right: 1px solid #fff;
  box-sizing: border-box;
  flex: none;
}
.auto-txt {
  font-size: 6.500px;
  font-weight: bold;
  text-anchor: middle;
  letter-spacing: 0.5px;
}
.auto-txt.dim {
  fill: #aaa;
}
.zero-txt {
  font-size: 18px;
}
.flag-num {
  font-size: 7px;
  font-weight: bold;
  fill: #fff;
  text-anchor: middle;
}
.test-select {
  width: 273px;
  padding-left: 75px;
  box-sizing: border-box;
  display: flex;
  align-items: center;
  font-family: 'DejaVu Sans', sans-serif;
  font-size: 12.4px;
  flex: none;
}
.test-select span {
  margin-left: 1px;
}
.caret {
  width: 0;
  height: 0;
  border: 4px solid transparent;
  border-top: 4px solid #000;
  border-bottom: none;
  display: inline-block;
}
.test-select .caret {
  margin-left: auto;
  margin-right: 4px;
}
.rpm {
  margin-left: auto;
  padding: 0 12px 3px 0;
  display: flex;
  align-items: baseline;
  color: #111;
}
.rpm strong {
  font-size: 24px;
  color: #000080;
  margin-right: 3px;
}
.rpm span {
  font-size: 11px;
}

/* oscilloscope */
.scope {
  height: 659px;
  position: relative;
  background: #000;
  border-top: 1px solid #fff;
  overflow: hidden;
  box-shadow: inset 1px 0 0 #888;
}
.scope-svg text {
  font-family: 'Liberation Sans', Arial, sans-serif;
}
.grid path {
  stroke: #6a6a6a;
  stroke-width: 1;
  stroke-dasharray: 1 6;
  fill: none;
}
.bands rect {
  fill: #008000;
}
.cursor {
  stroke: #ffff20;
  stroke-dasharray: 3 3;
  fill: none;
}
.zero {
  stroke: #fff;
  stroke-dasharray: 2 2;
  fill: none;
}
.frame, .yticks {
  stroke: #fff;
  fill: none;
}
.magenta {
  stroke: #a000a0;
  fill: none;
}
.blue-edge {
  stroke: #0000f0;
  stroke-width: 2;
}
.trace-green {
  fill: none;
  stroke: #00e800;
  stroke-width: 1.100;
}
.trace-blue {
  fill: none;
  stroke: #2a60ff;
  stroke-width: 1.400;
}
.ylabels text {
  fill: #fff;
  font-size: 11px;
  text-anchor: end;
}
.xlabels text {
  fill: #ccffcc;
  font-size: 11px;
  text-anchor: middle;
}
.xlabels .x-last {
  text-anchor: end;
}
.ch-green {
  fill: #00e800;
  font-size: 12px;
  letter-spacing: 0.43px;
}
.ch-blue {
  fill: #2a60ff;
  font-size: 12px;
  letter-spacing: 0.43px;
}
.band-names text {
  fill: #fff;
  font-size: 15px;
  text-anchor: middle;
}
.tags rect {
  fill: #fff;
}
.tags text {
  fill: #f00000;
  font-size: 11px;
}
.pts circle {
  stroke: #000;
}
.pts .pt-white {
  fill: #fff;
  stroke: none;
}
.ruler-bg {
  fill: #ccffcc;
  stroke: #888;
}
.ruler-ticks {
  stroke: #000;
}
.ruler-labels text {
  fill: #000;
  font-size: 16px;
  text-anchor: middle;
}
.readout {
  position: absolute;
  left: 236px;
  top: 180px;
  width: 199px;
  height: 29px;
  display: flex;
  background: #ccffcc;
  box-shadow: 1px 1px 0 #000;
  font-size: 21px;
  line-height: 29px;
}
.ro-icon {
  width: 21px;
  flex: none;
}
.ro-icon.purple { background: #e8c8e8; }
.ro-icon.blue { background: #c8c8ff; }
.ro-icon.grey { background: #cccccc; }
.ro-val {
  padding-right: 1px;
  white-space: nowrap;
}
.purple-text { color: #800080; }
.blue-text { color: #0000e0; }

/* scroll row */
.scrollrow {
  height: 17px;
  display: flex;
  align-items: stretch;
  padding-left: 1px;
  position: relative;
}
.sbtn {
  width: 16px;
  flex: none;
  display: flex;
  align-items: center;
  justify-content: center;
  background: #ece9d8;
  box-shadow: inset -1px -1px 0 #8a8a80, inset 1px 1px 0 #fff;
}
.sbtn.plus {
  margin-left: 2px;
}
.sbtn.nav {
  width: 23px;
}
.sbtn.gap {
  margin-left: 1px;
}
.sbtn.last {
  margin-left: 1px;
  border-left: 1px solid #0000f0;
  box-sizing: border-box;
  margin-right: 2px;
}
.sfield {
  background: #fff;
  display: flex;
  align-items: center;
  padding-left: 3px;
  box-sizing: border-box;
  font-size: 12px;
}
.sfield .caret {
  margin-left: auto;
  margin-right: 5px;
}
.sfield.first { width: 69px; }
.sfield.second { width: 66px; margin-right: 1px; }
.track {
  flex: 1;
  background: repeating-conic-gradient(#fff 0 25%, #ece9d8 0 50%) 0 0 / 2px 2px;
  padding-left: 285px;
}
.thumb {
  width: 16px;
  height: 17px;
  background: #ece9d8;
  box-shadow: inset -1px -1px 0 #8a8a80, inset 1px 1px 0 #fff;
}
.pageno {
  width: 58px;
  text-align: center;
  font-size: 12px;
  line-height: 17px;
}

/* lower panel */
.lower {
  height: 95px;
  box-sizing: border-box;
}
.range-bar {
  margin-left: 433px;
  width: 573px;
  height: 6px;
  box-sizing: border-box;
  border: 1px solid #a8a698;
  border-top: none;
  display: flex;
  align-items: center;
  padding: 0 3px;
  gap: 3px;
}
.range-bar .mark {
  width: 0;
  height: 0;
  border: 3px solid transparent;
  border-top: 4px solid #2a60d0;
  border-bottom: none;
}
.range-dots {
  flex: 1;
  border-top: 1px dotted #2a60d0;
}
.groups {
  display: flex;
  align-items: flex-start;
  padding-left: 338px;
}
.grp {
  height: 78px;
  box-sizing: border-box;
  border: 1px solid #d4d1bf;
  border-radius: 6px;
  margin-top: 9px;
  flex: none;
}
.grp-title {
  margin: -5px 0 0 6px;
  padding: 0;
  height: 14px;
  font-size: 12px;
  line-height: 14px;
  font-weight: bold;
  letter-spacing: 0.2px;
}
.grp-title.navy { color: #000080; }
.grp-title.muted { color: #aca899; }
.grp-title.blue { color: #0a50d8; }
.grp-channel {
  width: 372px;
  display: flex;
  padding-left: 4px;
}
.channel-col {
  width: 267px;
  flex: none;
  margin-top: -4px;
}
.channels {
  display: flex;
  gap: 2px;
}
.ch {
  width: 32px;
  height: 20px;
  box-sizing: border-box;
  border: 1px solid #0a3a6a;
  border-radius: 2px;
  background: linear-gradient(#d8d8d8, #a4a4a4);
  color: #777;
  font-size: 13px;
}
.ch-on {
  width: 55px;
  background: linear-gradient(#18f018, #00c800);
  color: #000;
  font-weight: bold;
}
.ch-sel {
  background: linear-gradient(#5a86ff, #1c48e0);
  color: #000;
}
.combo-row {
  display: flex;
  gap: 4px;
  margin: 4px 0 0 2px;
  align-items: center;
}
.combo {
  width: 241px;
  height: 24px;
  box-sizing: border-box;
  border: 1px solid #10e010;
  background: #fff;
  display: flex;
  align-items: center;
  padding: 0 1px 0 2px;
}
.combo-text {
  flex: 1;
  font-family: 'DejaVu Sans', sans-serif;
  font-size: 12.2px;
  white-space: nowrap;
  overflow: hidden;
}
.dots {
  width: 17px;
  height: 20px;
  background: #ece9d8;
  box-shadow: inset -1px -1px 0 #8a8a80, inset 1px 1px 0 #fff;
  font-weight: bold;
  font-size: 11px;
  line-height: 12px;
}
.ch-tools {
  display: flex;
  margin: 2px 0 0 3px;
  align-items: center;
  height: 27px;
}
.ch-tool {
  width: 30px;
  height: 27px;
  display: flex;
  align-items: center;
  justify-content: center;
  flex: none;
}
.fx {
  margin-left: 6px;
  font-family: 'Liberation Serif', serif;
  font-size: 25px;
  line-height: 24px;
  font-weight: bold;
  white-space: nowrap;
}
.fx small {
  font-size: 13px;
  font-style: italic;
}
.knob {
  flex: none;
}
.knob text {
  font-family: 'Liberation Sans', sans-serif;
}
.knob-ticks path {
  stroke: #b4b2a4;
  fill: none;
}
.knob-major {
  stroke: #000;
  fill: none;
}
.knob-ring {
  fill: none;
  stroke: url(#ring);
  stroke-width: 3;
}
.knob-val {
  font-size: 15px;
  text-anchor: middle;
}
.knob-label {
  font-size: 10px;
  text-anchor: middle;
}
.dim-label {
  fill: #aca899;
}
.grp-freq {
  width: 104px;
  margin-left: 4px;
}
.grp-freq .knob {
  margin-top: -9px;
}
.grp-sync {
  width: 136px;
  margin-left: 6px;
}
.sync-row {
  display: flex;
  align-items: center;
  gap: 4px;
  margin: 3px 0 0 9px;
  height: 27px;
}
.sync-row.second {
  margin-top: 5px;
  height: 24px;
}
.sync-icon {
  width: 26px;
  height: 26px;
  display: flex;
  align-items: center;
  justify-content: center;
  flex: none;
}
.sync-select {
  width: 46px;
  height: 22px;
  border: 1px solid #b4b2a4;
  box-sizing: border-box;
  display: flex;
  align-items: center;
  padding-left: 5px;
  font-size: 12px;
  color: #555;
  margin-right: 9px;
}
.sync-select .caret {
  margin-left: auto;
  margin-right: 5px;
}
.caret.light {
  border-top-color: #aaa;
}
.grp-ctrl {
  width: 132px;
  margin-left: 6px;
}
.ctrl-row {
  display: flex;
  gap: 3px;
  margin-left: 3px;
  margin-top: 1px;
}
.ctrl-row.second {
  margin-top: 2px;
  margin-left: 2px;
  align-items: flex-end;
  gap: 10px;
}
.ctrl-btn {
  width: 39px;
  height: 32px;
  box-sizing: border-box;
  display: flex;
  align-items: center;
  justify-content: center;
  border-radius: 2px;
}
.ctrl-btn.flat {
  border: 1px solid #d4d1bf;
}
.ctrl-btn.navy-edge {
  border: 1px solid #0a3a6a;
  background: linear-gradient(#fff, #e0ddcc);
}
.ctrl-btn.green-edge {
  border: 1px solid #10e010;
  background: #fff;
  margin-left: 1px;
}
.start {
  width: 83px;
  height: 31px;
  box-sizing: border-box;
  border: 1px solid #0a3a6a;
  border-radius: 2px;
  background: linear-gradient(#fff, #e0ddcc);
  display: flex;
  align-items: center;
  padding-left: 10px;
  font-weight: bold;
  font-size: 11px;
}
.start span {
  margin-left: 16px;
  font-family: 'DejaVu Sans', sans-serif;
}
.speed {
  color: #008000;
  font-weight: bold;
  font-size: 12px;
  letter-spacing: 0.4px;
  margin-bottom: 2px;
}
.traffic {
  margin-left: 205px;
  margin-top: 24px;
  width: 128px;
  height: 41px;
  box-sizing: border-box;
  padding: 3px;
  display: flex;
  gap: 2px;
  background: #ece9d8;
  box-shadow: inset -1px -1px 0 #a8a698, inset 1px 1px 0 #fff, -1px -1px 0 #d4d1bf;
}
.traffic-main {
  flex: 1;
  background: #bcdcee;
  color: #889;
  font-size: 10px;
  text-align: right;
  padding: 1px 2px;
}
.traffic-main svg {
  margin: 2px 2px 0 auto;
}
.traffic-side {
  width: 14px;
  display: flex;
  flex-direction: column;
  gap: 2px;
}
.traffic-side span {
  flex: 1;
  background: #bcdcee;
  display: flex;
  align-items: center;
  justify-content: center;
}

/* status */
.statusbar {
  height: 18px;
  box-sizing: border-box;
  display: flex;
  gap: 2px;
  padding: 1px 0 0 1px;
  border-top: 1px solid #8a8a80;
  font-size: 10.7px;
}
.cell {
  height: 16px;
  line-height: 17px;
  box-sizing: border-box;
  border-top: 1px solid #aca899;
  border-left: 1px solid #aca899;
  border-right: 1px solid #fff;
  padding-left: 3px;
  white-space: nowrap;
}
.c-usb { width: 189px; }
.c-mid { width: 1197px; }
.c-ver { width: 47px; letter-spacing: 0.5px; }
.win-bottom {
  height: 2px;
  background: #2a6ad8;
}
```
